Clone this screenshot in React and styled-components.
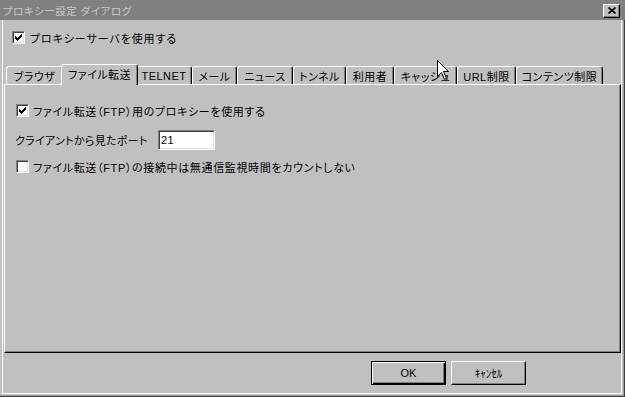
import React from "react";
import styled, { createGlobalStyle } from "styled-components";

const FONT = `"Liberation Sans", "Noto Sans CJK JP", sans-serif`;

const Global = createGlobalStyle`
  html, body { margin: 0; padding: 0; background: #c0c0c0; }
  body { font-family: ${FONT}; font-size: 11px; color: #000; font-feature-settings: "palt"; }
`;

const Window = styled.div`
  position: relative;
  width: 625px;
  height: 397px;
  box-sizing: border-box;
  background: #c0c0c0;
  display: flex;
  flex-direction: column;
  overflow: hidden;
  box-shadow: inset -1px -1px #404040, inset -2px -2px #a0a0a0;
`;

const TitleBar = styled.div`
  height: 20px;
  flex: none;
  background: #808080;
  display: flex;
  align-items: center;
  justify-content: space-between;
  padding: 0 5px 0 3px;
`;

const TitleText = styled.span`
  color: #c8c8c8;
  font-size: 10.5px;
  letter-spacing: 0.5px;
  white-space: pre;
`;

const CloseButton = styled.div`
  width: 17px;
  height: 14px;
  box-sizing: border-box;
  background: #c0c0c0;
  border-top: 1px solid #fff;
  border-left: 1px solid #fff;
  border-right: 1px solid #000;
  border-bottom: 1px solid #000;
  box-shadow: inset -1px -1px #808080;
  display: flex;
  align-items: center;
  justify-content: center;
  margin-top: 1px;
`;

const Body = styled.div`
  flex: 1;
  display: flex;
  flex-direction: column;
  margin: 0 3px 3px 2px;
  border-left: 1px solid #fff;
  border-right: 1px solid #fff;
  border-bottom: 1px solid #fff;
  padding: 11px 0 0 1px;
`;

const CheckRow = styled.div`
  display: flex;
  align-items: center;
  gap: ${(p) => p.$gap || 4}px;
  height: 13px;
  margin-left: ${(p) => p.$left}px;
  margin-top: ${(p) => p.$top || 0}px;
  white-space: nowrap;
  letter-spacing: ${(p) => p.$ls || 0}px;
`;

const Box = styled.div`
  width: 13px;
  height: 13px;
  box-sizing: border-box;
  flex: none;
  background: #fff;
  border-top: 1px solid #808080;
  border-left: 1px solid #808080;
  border-right: 1px solid #fff;
  border-bottom: 1px solid #fff;
  box-shadow: inset 1px 1px #404040, inset -1px -1px #dfdfdf;
  display: flex;
  align-items: center;
  justify-content: center;
`;

const TabStrip = styled.div`
  display: flex;
  align-items: flex-end;
  height: 20px;
  margin-top: 20px;
  padding-left: 2px;
`;

const Tab = styled.div`
  position: relative;
  z-index: ${(p) => (p.$active ? 1 : 0)};
  box-sizing: border-box;
  flex: none;
  width: ${(p) => p.$w + (p.$active ? 4 : 0)}px;
  height: ${(p) => (p.$active ? 21 : 18)}px;
  margin: ${(p) => (p.$active ? "0 -2px -1px -2px" : "0")};
  background: #c0c0c0;
  border-top: 1px solid #fff;
  border-left: 1px solid #fff;
  border-right: 1px solid #000;
  border-radius: 3px 3px 0 0;
  box-shadow: inset -1px 0 #808080;
  display: flex;
  align-items: center;
  justify-content: center;
  padding-bottom: ${(p) => (p.$active ? 2 : 0)}px;
  white-space: nowrap;
  letter-spacing: 0.5px;
`;

const Panel = styled.div`
  box-sizing: border-box;
  height: 269px;
  flex: none;
  border-top: 1px solid #fff;
  border-left: 1px solid #fff;
  border-right: 1px solid #000;
  border-bottom: 1px solid #000;
  box-shadow: inset -1px -1px #808080;
  padding-top: 19px;
  display: flex;
  flex-direction: column;
`;

const FieldRow = styled.div`
  display: flex;
  align-items: center;
  height: 20px;
  margin: ${(p) => p.$top}px 0 0 ${(p) => p.$left}px;
  white-space: nowrap;
  letter-spacing: 0.3px;
`;

const FieldLabel = styled.span`
  width: ${(p) => p.$w}px;
  flex: none;
`;

const TextInput = styled.div`
  width: 57px;
  height: 20px;
  box-sizing: border-box;
  background: #fff;
  border-top: 1px solid #808080;
  border-left: 1px solid #808080;
  border-right: 1px solid #fff;
  border-bottom: 1px solid #fff;
  box-shadow: inset 1px 1px #404040, inset -1px -1px #dfdfdf;
  padding: 0 0 0 2px;
  display: flex;
  align-items: center;
  font-size: 11px;
`;

const Footer = styled.div`
  display: flex;
  justify-content: flex-end;
  gap: 5px;
  padding: 8px 95px 0 0;
`;

const Button = styled.div`
  width: 75px;
  height: 24px;
  box-sizing: border-box;
  display: flex;
  align-items: center;
  justify-content: center;
  background: #c0c0c0;
  border: 1px solid #000;
  border-top-color: ${(p) => (p.$default ? "#000" : "#fff")};
  border-left-color: ${(p) => (p.$default ? "#000" : "#fff")};
  box-shadow: ${(p) =>
    p.$default
      ? "inset 1px 1px #fff, inset -1px -1px #000, inset -2px -2px #808080"
      : "inset -1px -1px #808080"};
  font-size: 11px;
`;

const Cursor = styled.svg`
  position: absolute;
  left: 437px;
  top: 60px;
  z-index: 5;
`;

const Check = () => (
  <svg width="7" height="7" viewBox="0 0 7 7" shapeRendering="crispEdges">
    <path
      d="M0 2h1v3h-1z M1 3h1v3h-1z M2 4h1v3h-1z M3 3h1v3h-1z M4 2h1v3h-1z M5 1h1v3h-1z M6 0h1v3h-1z"
      fill="#000"
    />
  </svg>
);

const CheckBox = ({ checked }) => <Box>{checked && <Check />}</Box>;

const tabs = [
  { label: "ブラウザ", w: 57 },
  { label: "ファイル転送", w: 73, active: true },
  { label: "TELNET", w: 56 },
  { label: "メール", w: 45 },
  { label: "ニュース", w: 56 },
  { label: "トンネル", w: 53 },
  { label: "利用者", w: 48 },
  { label: "キャッシュ", w: 63 },
  { label: "URL制限", w: 59 },
  { label: "コンテンツ制限", w: 87 },
];

export default function App() {
  return (
    <>
      <Global />
      <Window>
        <TitleBar>
          <TitleText>プロキシー設定 ダイアログ</TitleText>
          <CloseButton>
            <svg width="8" height="7" viewBox="0 0 8 7">
              <path d="M0.5 0.5 L7.5 6.5 M7.5 0.5 L0.5 6.5" stroke="#000" strokeWidth="1.6" />
            </svg>
          </CloseButton>
        </TitleBar>
        <Body>
          <CheckRow $left={8} $gap={5} $ls={0.9}>
            <CheckBox checked />
            <span>プロキシーサーバを使用する</span>
          </CheckRow>
          <TabStrip>
            {tabs.map((t) => (
              <Tab key={t.label} $w={t.w} $active={t.active}>
                {t.label}
              </Tab>
            ))}
          </TabStrip>
          <Panel>
            <CheckRow $left={11} $ls={0.65}>
              <CheckBox checked />
              <span>ファイル転送（FTP）用のプロキシーを使用する</span>
            </CheckRow>
            <FieldRow $top={13} $left={10}>
              <FieldLabel $w={143}>クライアントから見たポート</FieldLabel>
              <TextInput>21</TextInput>
            </FieldRow>
            <CheckRow $left={11} $top={10} $ls={0.65}>
              <CheckBox />
              <span>ファイル転送（FTP）の接続中は無通信監視時間をカウントしない</span>
            </CheckRow>
          </Panel>
          <Footer>
            <Button $default>OK</Button>
            <Button>ｷｬﾝｾﾙ</Button>
          </Footer>
        </Body>
        <Cursor width="13" height="21" viewBox="0 0 13 21">
          <path
            d="M0.5 0.5 L0.5 16.5 L4.5 12.5 L7.5 19.5 L9.5 18.5 L6.5 11.5 L11.5 11.5 Z"
            fill="#fff"
            stroke="#000"
            strokeWidth="1"
          />
        </Cursor>
      </Window>
    </>
  );
}
